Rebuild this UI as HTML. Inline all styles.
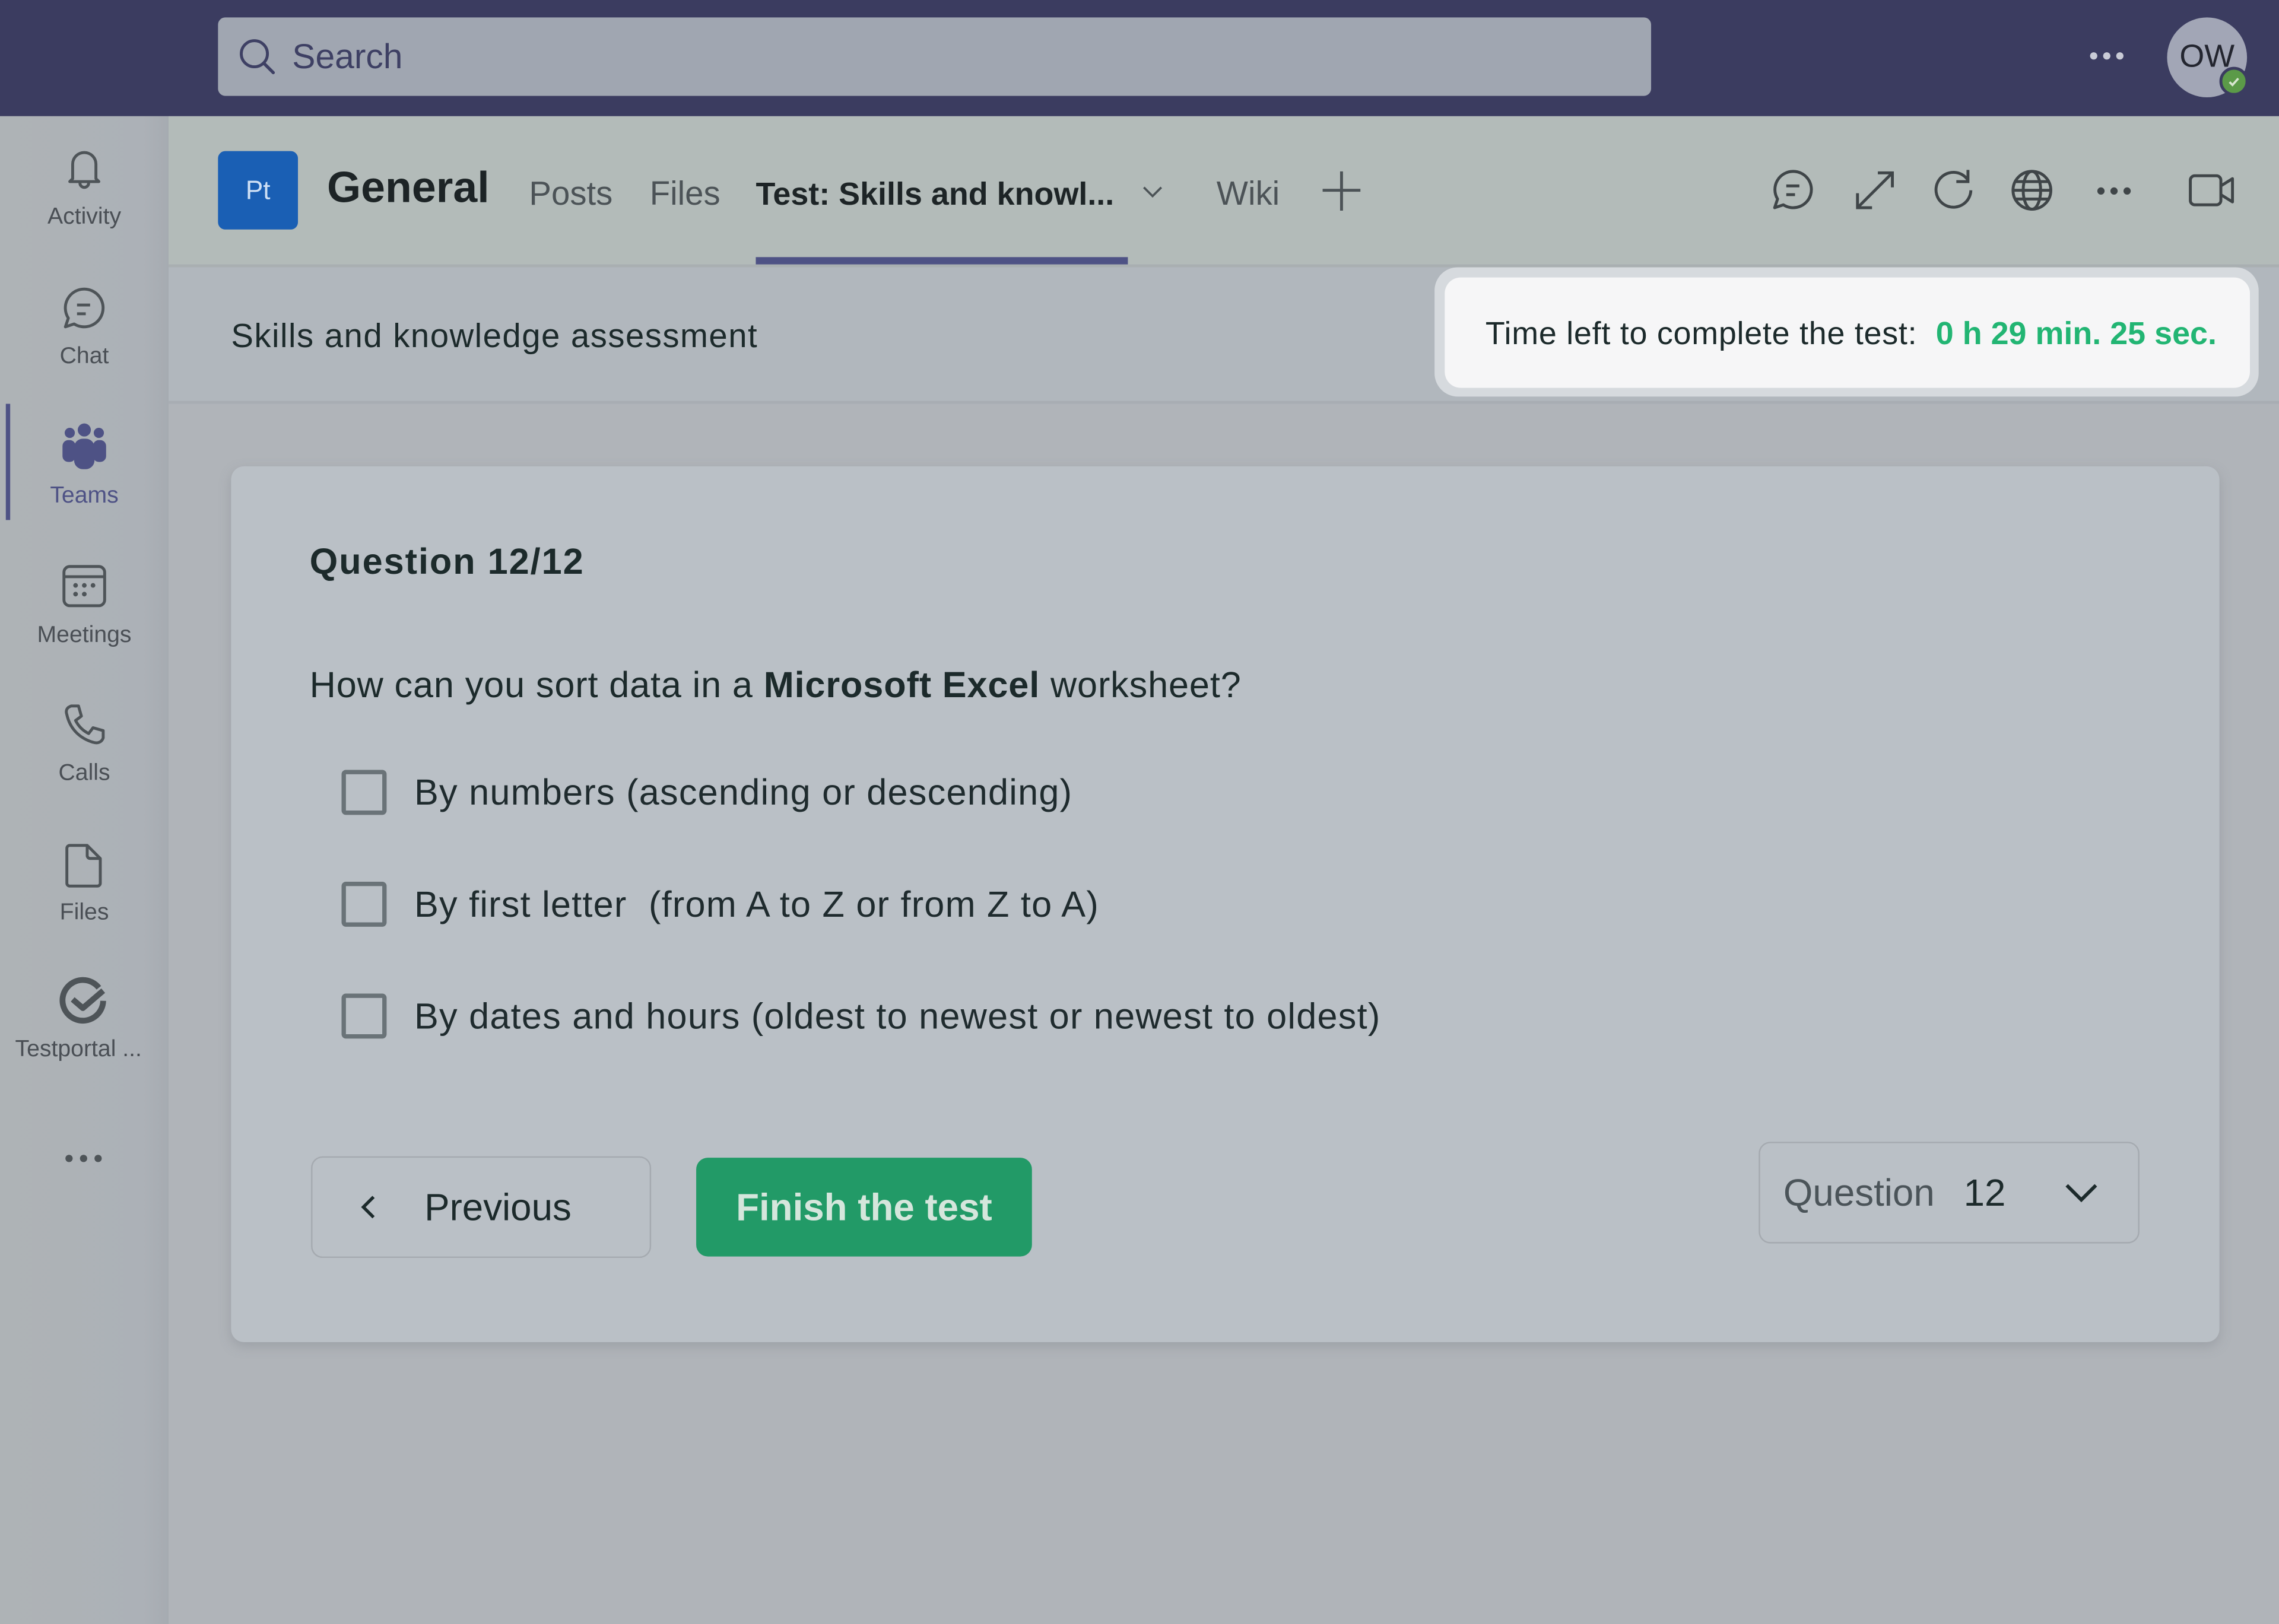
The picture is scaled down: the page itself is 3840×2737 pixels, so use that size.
<!DOCTYPE html>
<html><head><meta charset="utf-8"><style>
*{margin:0;padding:0;box-sizing:border-box}
html,body{width:3840px;height:2737px;overflow:hidden;background:#b0b4b9}
#w{position:absolute;left:0;top:0;width:1568px;height:1118px;transform:scale(2.44898,2.4481);transform-origin:0 0;font-family:"Liberation Sans",sans-serif;color:#1c2a2b}
.a{position:absolute}
.lbl{position:absolute;width:116px;left:0;text-align:center;font-size:16px;color:#4a4f55}
.ic{position:absolute;left:40px;width:36px;height:36px}
.tab{position:absolute;top:118px;font-size:23px;color:#4c5357}
.cb{position:absolute;left:235px;width:31px;height:31px;border:3px solid #6a7378;border-radius:3px}
.opt{position:absolute;left:285px;font-size:25px;color:#1f2b2e;letter-spacing:0.5px;white-space:nowrap}
</style></head><body><div id="w">
<!-- top bar -->
<div class="a" style="left:0;top:0;width:1568px;height:80px;background:#3b3c60"></div>
<div class="a" style="left:150px;top:12px;width:986px;height:54px;background:#a0a6b1;border-radius:5px"></div>
<svg class="a" style="left:163px;top:25px" width="28" height="28" viewBox="0 0 28 28"><circle cx="12" cy="12" r="9" fill="none" stroke="#3e4064" stroke-width="2"/><path d="M18.5 18.5L25 25" stroke="#3e4064" stroke-width="2.2" stroke-linecap="round"/></svg>
<div class="a" style="left:201px;top:26px;font-size:24px;color:#3e4064">Search</div>
<div class="a" style="left:1438px;top:36px;width:5px;height:5px;border-radius:50%;background:#c9cbd6;box-shadow:9px 0 #c9cbd6,18px 0 #c9cbd6"></div>
<div class="a" style="left:1491px;top:12px;width:55px;height:55px;border-radius:50%;background:#a2a6b6"></div>
<div class="a" style="left:1491px;top:26px;width:55px;text-align:center;font-size:22px;color:#23252f">OW</div>
<div class="a" style="left:1527px;top:46px;width:20px;height:20px;border-radius:50%;background:#5b9a48;border:2px solid #3b3c60"></div>
<svg class="a" style="left:1531px;top:50px" width="12" height="12" viewBox="0 0 12 12"><path d="M3 6.5l2 2 4-4.5" stroke="#d8e6d0" stroke-width="1.5" fill="none"/></svg>

<!-- sidebar -->
<div class="a" style="left:0;top:80px;width:116px;height:1038px;background:linear-gradient(90deg,#aeb3b6 0,#acb1b7 85%,#a6abb1 100%)"></div>
<div class="a" style="left:4px;top:278px;width:3px;height:80px;background:#4e5285"></div>
<svg class="ic" style="top:98px" viewBox="0 0 36 36"><path d="M10 25V15a8 8 0 0116 0v10l2 2H8z" fill="none" stroke="#4e5458" stroke-width="2" stroke-linejoin="round"/><path d="M15 28a3 3 0 006 0" fill="none" stroke="#4e5458" stroke-width="2"/></svg>
<div class="lbl" style="top:141px">Activity</div>
<svg class="ic" style="top:195px" viewBox="0 0 36 36"><path d="M18 4a13 13 0 11-7 24l-6 2 2-6A13 13 0 0118 4z" fill="none" stroke="#4e5458" stroke-width="2" stroke-linejoin="round"/><path d="M13 15h9M13 21h6" stroke="#4e5458" stroke-width="2"/></svg>
<div class="lbl" style="top:237px">Chat</div>
<svg class="ic" style="top:290px" viewBox="0 0 36 36" fill="#4e5285"><circle cx="8" cy="8" r="3.5"/><circle cx="18" cy="6" r="4.5"/><circle cx="28" cy="8" r="3.5"/><rect x="3" y="13" width="9" height="15" rx="4"/><rect x="24" y="13" width="9" height="15" rx="4"/><rect x="11" y="12" width="14" height="21" rx="6"/></svg>
<div class="lbl" style="top:333px;color:#4e5285">Teams</div>
<svg class="ic" style="top:386px" viewBox="0 0 36 36"><rect x="4" y="4" width="28" height="27" rx="4" fill="none" stroke="#4e5458" stroke-width="2"/><path d="M4 11h28" stroke="#4e5458" stroke-width="2"/><g fill="#4e5458"><circle cx="12" cy="17" r="1.6"/><circle cx="18" cy="17" r="1.6"/><circle cx="24" cy="17" r="1.6"/><circle cx="12" cy="23" r="1.6"/><circle cx="18" cy="23" r="1.6"/></g></svg>
<div class="lbl" style="top:429px">Meetings</div>
<svg class="ic" style="top:481px" viewBox="0 0 36 36"><path d="M9 5l5 0 2 7-4 3c2 4 5 7 9 9l3-4 7 2v5c-1 3-4 4-7 3C14 27 8 20 6 11c-1-3 0-5 3-6z" fill="none" stroke="#4e5458" stroke-width="2" stroke-linejoin="round"/></svg>
<div class="lbl" style="top:524px">Calls</div>
<svg class="ic" style="top:578px" viewBox="0 0 36 36"><path d="M8 4h12l9 9v17a2 2 0 01-2 2H8a2 2 0 01-2-2V6a2 2 0 012-2z" fill="none" stroke="#4e5458" stroke-width="2" stroke-linejoin="round"/><path d="M20 4v7a2 2 0 002 2h7" fill="none" stroke="#4e5458" stroke-width="2"/></svg>
<div class="lbl" style="top:620px">Files</div>
<svg class="ic" style="top:671px" viewBox="0 0 36 36"><path d="M28 9A14 14 0 1031 18" fill="none" stroke="#4e5458" stroke-width="4"/><path d="M10 17l7 6 14-12" fill="none" stroke="#4e5458" stroke-width="4" stroke-linejoin="round"/></svg>
<div class="lbl" style="top:714px;left:-4px">Testportal ...</div>
<div class="a" style="left:45px;top:795px;width:5px;height:5px;border-radius:50%;background:#4e5458;box-shadow:10px 0 #4e5458,20px 0 #4e5458"></div>

<!-- header -->
<div class="a" style="left:116px;top:80px;width:1452px;height:103px;background:#b3bbb9"></div>
<div class="a" style="left:116px;top:182px;width:1452px;height:2px;background:#a9afb1"></div>
<div class="a" style="left:150px;top:104px;width:55px;height:54px;background:#1a5fb4;border-radius:5px;color:#cfe0f5;font-size:18px;text-align:center;line-height:54px">Pt</div>
<div class="a" style="left:225px;top:113px;font-size:30px;font-weight:bold;color:#1d2426">General</div>
<div class="tab" style="left:364px;top:120px">Posts</div>
<div class="tab" style="left:447px;top:120px">Files</div>
<div class="tab" style="left:520px;font-weight:bold;color:#1d2426;font-size:22px;top:121px">Test: Skills and knowl...</div>
<svg class="a" style="left:785px;top:126px" width="16" height="12" viewBox="0 0 16 12"><path d="M2 3l6 6 6-6" fill="none" stroke="#4c5357" stroke-width="1.5"/></svg>
<div class="tab" style="left:837px;top:120px">Wiki</div>
<svg class="a" style="left:909px;top:116px" width="28" height="30" viewBox="0 0 28 30"><path d="M14 2v27M1 15h26" stroke="#4c5357" stroke-width="2"/></svg>
<div class="a" style="left:520px;top:177px;width:256px;height:5px;background:#4e5285"></div>
<!-- right icons -->
<svg class="a" style="left:1218px;top:115px" width="32" height="32" viewBox="0 0 32 32"><path d="M16 3a12.5 12.5 0 11-7 23l-6 2 2-6A12.5 12.5 0 0116 3z" fill="none" stroke="#3f4548" stroke-width="2" stroke-linejoin="round"/><path d="M11 13h9M11 19h6" stroke="#3f4548" stroke-width="2"/></svg>
<svg class="a" style="left:1274px;top:115px" width="32" height="32" viewBox="0 0 32 32"><path d="M28 4L4 28M18 4h10v10M4 18v10h10" fill="none" stroke="#3f4548" stroke-width="2"/></svg>
<svg class="a" style="left:1328px;top:115px" width="32" height="32" viewBox="0 0 32 32"><path d="M26 9A12 12 0 1028 16M26 2v8h-8" fill="none" stroke="#3f4548" stroke-width="2"/></svg>
<svg class="a" style="left:1382px;top:115px" width="32" height="32" viewBox="0 0 32 32"><g fill="none" stroke="#3f4548" stroke-width="2"><circle cx="16" cy="16" r="13"/><ellipse cx="16" cy="16" rx="6" ry="13"/><path d="M3 16h26M5 10h22M5 22h22"/></g></svg>
<div class="a" style="left:1443px;top:129px;width:5px;height:5px;border-radius:50%;background:#3f4548;box-shadow:9px 0 #3f4548,18px 0 #3f4548"></div>
<svg class="a" style="left:1505px;top:117px" width="34" height="28" viewBox="0 0 34 28"><rect x="2" y="4" width="21" height="20" rx="3" fill="none" stroke="#3f4548" stroke-width="2"/><path d="M23 11l8-5v16l-8-5" fill="none" stroke="#3f4548" stroke-width="2" stroke-linejoin="round"/></svg>

<!-- subheader -->
<div class="a" style="left:116px;top:184px;width:1452px;height:93px;background:#b1b7bd"></div>
<div class="a" style="left:116px;top:276px;width:1452px;height:2px;background:#a8adb3"></div>
<div class="a" style="left:159px;top:218px;font-size:23px;letter-spacing:0.6px;color:#1c2a2b;white-space:nowrap">Skills and knowledge assessment</div>
<div class="a" style="left:987px;top:184px;width:567px;height:89px;background:#d6dade;border-radius:16px"></div>
<div class="a" style="left:994px;top:191px;width:554px;height:76px;background:#f6f6f7;border-radius:11px"></div>
<div class="a" style="left:1022px;top:217px;font-size:22px;letter-spacing:0.3px;color:#1c2a2b;white-space:nowrap">Time left to complete the test:&nbsp;&nbsp;<span style="color:#22b573;font-weight:bold;letter-spacing:0">0 h 29 min. 25 sec.</span></div>

<!-- card -->
<div class="a" style="left:159px;top:321px;width:1368px;height:603px;background:#bac0c6;border-radius:9px;box-shadow:0 3px 8px rgba(120,125,135,.35)"></div>
<div class="a" style="left:213px;top:373px;font-size:25px;letter-spacing:0.8px;font-weight:bold;color:#1c2a2b">Question 12/12</div>
<div class="a" style="left:213px;top:458px;font-size:25px;letter-spacing:0.35px;color:#1c2a2b;white-space:nowrap">How can you sort data in a <b>Microsoft Excel</b> worksheet?</div>
<div class="cb" style="top:530px"></div><div class="opt" style="top:532px">By numbers (ascending or descending)</div>
<div class="cb" style="top:607px"></div><div class="opt" style="top:609px">By first letter&nbsp; (from A to Z or from Z to A)</div>
<div class="cb" style="top:684px"></div><div class="opt" style="top:686px">By dates and hours (oldest to newest or newest to oldest)</div>

<div class="a" style="left:214px;top:796px;width:234px;height:70px;border:1.5px solid #a5aab0;border-radius:8px"></div>
<svg class="a" style="left:246px;top:821px" width="16" height="20" viewBox="0 0 16 20"><path d="M11 3L4 10l7 7" fill="none" stroke="#1c2a2b" stroke-width="2.2"/></svg>
<div class="a" style="left:292px;top:816px;font-size:26px;color:#1c2a2b">Previous</div>
<div class="a" style="left:479px;top:797px;width:231px;height:68px;background:#229a67;border-radius:8px;color:#d5e6dc;font-size:26px;font-weight:bold;text-align:center;line-height:68px">Finish the test</div>

<div class="a" style="left:1210px;top:786px;width:262px;height:70px;border:1.5px solid #a5aab0;border-radius:8px"></div>
<div class="a" style="left:1227px;top:806px;font-size:26px;color:#4b5459">Question</div>
<div class="a" style="left:1351px;top:806px;font-size:26px;color:#1c2a2b">12</div>
<svg class="a" style="left:1419px;top:812px" width="26" height="18" viewBox="0 0 26 18"><path d="M3 4l10 10 10-10" fill="none" stroke="#1c2a2b" stroke-width="2.4"/></svg>
</div></body></html>
